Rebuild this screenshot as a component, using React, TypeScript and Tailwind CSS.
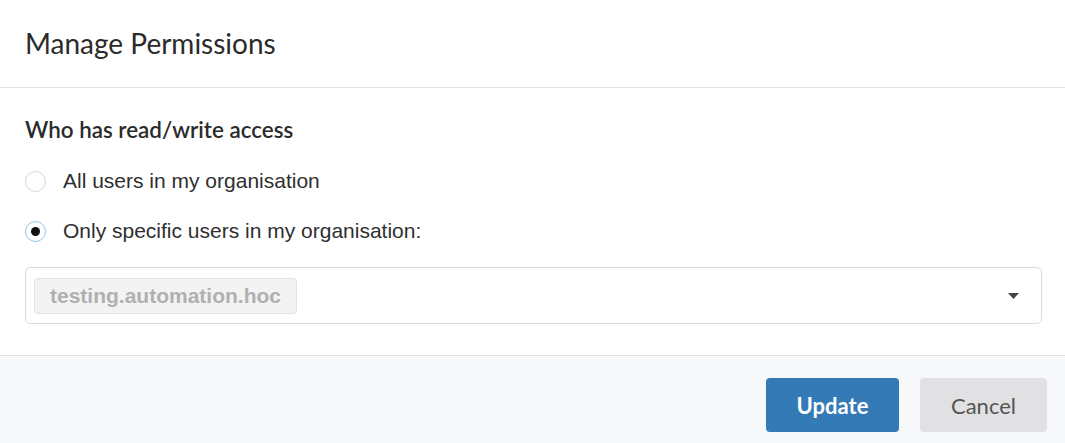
export default function App() {
  return (
    <div className="w-[1065px] h-[443px] bg-white flex flex-col overflow-hidden">
      <div className="h-[88px] border-b border-[#e2e2e2] px-[25px] flex items-center">
        <h1 className="font-['Lato',sans-serif] text-[28px] text-[#2b2b2b] pb-[1px]">Manage Permissions</h1>
      </div>
      <div className="flex-1 pl-[25px] pr-[23px] pt-[29px]">
        <h2 className="font-['Lato',sans-serif] font-semibold text-[22.4px] text-[#2b2b2b] leading-[26px]">Who has read/write access</h2>
        <div className="mt-[23px] flex items-center h-[30px]">
          <span className="w-[21px] h-[21px] rounded-full border border-[#d6d6d6] bg-white" />
          <span className="ml-[17px] font-['Liberation_Sans',Arial,sans-serif] text-[21px] text-[#2f2f2f]">All users in my organisation</span>
        </div>
        <div className="mt-[20px] flex items-center h-[30px]">
          <span className="w-[21px] h-[21px] rounded-full border border-[#8cc5dc] bg-white flex items-center justify-center">
            <span className="w-[9px] h-[9px] rounded-full bg-[#111]" />
          </span>
          <span className="ml-[17px] font-['Liberation_Sans',Arial,sans-serif] text-[21px] text-[#2f2f2f]">Only specific users in my organisation:</span>
        </div>
        <div className="mt-[21px] h-[57px] border border-[#dcdcdc] rounded-[5px] flex items-center pl-[8px] pr-[22px]">
          <span className="h-[36px] px-[15px] flex items-center bg-[#f3f3f3] border border-[#e2e2e2] rounded-[4px] font-['Liberation_Sans',Arial,sans-serif] font-bold text-[21px] text-[#b0b0b0]">testing.automation.hoc</span>
          <div className="flex-1" />
          <svg width="11" height="6" viewBox="0 0 11 6">
            <path d="M0 0 H11 L5.5 6 Z" fill="#444" />
          </svg>
        </div>
      </div>
      <div className="h-[88px] border-t border-[#dedfe3] bg-[#f7f8fa] flex items-start justify-end gap-[21px] pr-[18px] pt-[22px]">
        <button className="w-[133px] h-[54px] rounded-[4px] bg-[#337ab7] text-white font-['Lato',sans-serif] font-bold text-[22px]">Update</button>
        <button className="w-[127px] h-[54px] rounded-[4px] bg-[#e1e1e3] text-[#555] font-['Lato',sans-serif] text-[22px]">Cancel</button>
      </div>
    </div>
  );
}
